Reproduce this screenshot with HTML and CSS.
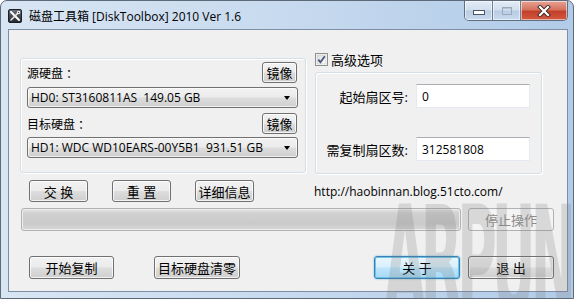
FILE: index.html
```html
<!DOCTYPE html>
<html lang="zh-CN">
<head>
    <meta charset="UTF-8">
    <title>磁盘工具箱 [DiskToolbox] 2010 Ver 1.6</title>
    <link rel="stylesheet" href="styles.css">
</head>
<body>
    <div class="window">
        <!-- 标题栏 -->
        <div class="titlebar">
            <svg class="app-icon" width="14" height="14" viewBox="0 0 14 14">
                <defs>
                    <linearGradient id="ic" x1="0" y1="0" x2="0" y2="1">
                        <stop offset="0" stop-color="#6a717b"/>
                        <stop offset="1" stop-color="#22272d"/>
                    </linearGradient>
                </defs>
                <rect x="0.5" y="0.5" width="13" height="13" rx="1.5" fill="url(#ic)" stroke="#1c2024"/>
                <path d="M3 3 L11 11" stroke="#fff" stroke-width="2" stroke-linecap="round"/>
                <path d="M11 3 L3 11" stroke="#e8e8e8" stroke-width="1.6" stroke-linecap="round"/>
                <circle cx="10.6" cy="3.4" r="1.6" fill="#fff"/>
                <circle cx="10.6" cy="3.4" r="0.7" fill="#3a3f46"/>
            </svg>
            <span class="title">磁盘工具箱 [DiskToolbox] 2010 Ver 1.6</span>
            <div class="caption-buttons">
                <span class="cap cap-min"><i></i></span>
                <span class="cap cap-max"><i></i></span>
                <span class="cap cap-close">
                    <svg width="14" height="12" viewBox="0 0 14 12">
                        <path d="M3 2 L11 10 M11 2 L3 10" stroke="#3b2a28" stroke-width="4" stroke-linecap="square"/>
                        <path d="M3 2 L11 10 M11 2 L3 10" stroke="#fff" stroke-width="2.2" stroke-linecap="square"/>
                    </svg>
                </span>
            </div>
        </div>

        <!-- 客户区 -->
        <div class="client">
            <div class="top-row">
                <div class="group disks">
                    <div class="disk-head">
                        <span>源硬盘 ：</span>
                        <button class="btn btn-mirror">镜像</button>
                    </div>
                    <div class="combo combo-first">
                        <span>HD0: ST3160811AS&nbsp; 149.05 GB</span>
                        <i class="arrow"></i>
                    </div>
                    <div class="disk-head disk-head-second">
                        <span>目标硬盘 ：</span>
                        <button class="btn btn-mirror">镜像</button>
                    </div>
                    <div class="combo combo-second">
                        <span>HD1: WDC WD10EARS-00Y5B1&nbsp; 931.51 GB</span>
                        <i class="arrow"></i>
                    </div>
                </div>

                <div class="advanced">
                    <label class="check">
                        <svg class="check-box" width="13" height="13" viewBox="0 0 13 13">
                            <defs>
                                <linearGradient id="cb" x1="0" y1="0" x2="1" y2="1">
                                    <stop offset="0" stop-color="#dcdcdc"/>
                                    <stop offset="1" stop-color="#fbfbfb"/>
                                </linearGradient>
                            </defs>
                            <rect x="0.5" y="0.5" width="12" height="12" fill="#fff" stroke="#8e8f8f"/>
                            <rect x="2" y="2" width="9" height="9" fill="url(#cb)" stroke="#c4c4c4" stroke-width="0.6"/>
                            <path d="M3.3 6.6 L5.4 9.2 L9.8 3.2" fill="none" stroke="#46577a" stroke-width="1.8"/>
                        </svg>
                        <span>高级选项</span>
                    </label>
                    <div class="group sectors">
                        <span class="field-label">起始扇区号:</span>
                        <div class="input">0</div>
                        <span class="field-label">需复制扇区数:</span>
                        <div class="input">312581808</div>
                    </div>
                </div>
            </div>

            <div class="action-row">
                <button class="btn btn-small">交 换</button>
                <button class="btn btn-small">重 置</button>
                <button class="btn btn-small">详细信息</button>
                <span class="link">http://haobinnan.blog.51cto.com/</span>
            </div>

            <div class="progress-row">
                <div class="progress"></div>
                <button class="btn btn-wide" disabled>停止操作</button>
            </div>

            <div class="bottom-row">
                <button class="btn btn-start">开始复制</button>
                <button class="btn btn-wide btn-wipe">目标硬盘清零</button>
                <button class="btn btn-wide btn-default">关 于</button>
                <button class="btn btn-wide">退 出</button>
            </div>
        </div>

        <!-- 水印 -->
        <div class="watermark">ARPUN</div>
    </div>
</body>
</html>
```

FILE: styles.css
```css
/* 整体 */
html, body {
    margin: 0;
    padding: 0;
    background: #ffffff;
}

body {
    font-family: "Open Sans", "Noto Sans CJK SC", sans-serif;
    font-size: 12px;
    color: #000;
}

.window {
    position: relative;
    width: 574px;
    height: 299px;
    box-sizing: border-box;
    border: 1px solid #5d6a7a;
    border-radius: 7px 7px 0 0;
    background: linear-gradient(to right, #d8e5f3 0%, #c9dbef 45%, #b1cbe8 100%);
    overflow: hidden;
}

/* 标题栏 */
.titlebar {
    height: 28px;
    display: flex;
    align-items: center;
}

.app-icon {
    margin-left: 7px;
    margin-top: 1px;
}

.title {
    margin-left: 7px;
    margin-top: 1px;
    font-size: 12px;
    color: #000;
}

.caption-buttons {
    align-self: flex-start;
    margin-left: auto;
    margin-right: 5px;
    display: flex;
    height: 19px;
    border: 1px solid #5f6e81;
    border-top: none;
    border-radius: 0 0 5px 5px;
    overflow: hidden;
}

.cap {
    display: flex;
    align-items: center;
    justify-content: center;
    height: 19px;
    box-shadow: inset 0 0 0 1px rgba(255, 255, 255, 0.55);
}

.cap-min,
.cap-max {
    width: 27px;
    background: linear-gradient(to bottom, #e3ecf6 0%, #d0deee 48%, #b8cce3 52%, #c8daee 100%);
    border-right: 1px solid #6f7f93;
}

.cap-min i {
    width: 10px;
    height: 3px;
    margin-top: 4px;
    background: #fff;
    border: 1px solid #4a5566;
}

.cap-max i {
    width: 8px;
    height: 6px;
    border: 1px solid #9aa9bb;
    box-shadow: inset 0 1px 0 #b5c3d3;
}

.cap-close {
    width: 46px;
    background: linear-gradient(to bottom, #e6a495 0%, #d6735e 45%, #c2402a 55%, #d4583f 100%);
}

/* 客户区 */
.client {
    margin-left: 7px;
    width: 560px;
    height: 263px;
    box-sizing: border-box;
    border: 1px solid #7d8fa5;
    background: #f0f0f0;
}

.top-row {
    display: flex;
    align-items: flex-start;
    margin-top: 22px;
    padding-left: 11px;
    gap: 9px;
}

.group {
    box-sizing: border-box;
    border: 1px solid #d5dfe5;
    border-radius: 3px;
    box-shadow: inset 1px 1px 0 #fff, 1px 1px 0 #fff;
}

.disks {
    width: 286px;
    height: 115px;
    margin-top: 6px;
    padding: 3px 7px 0 6px;
}

.disk-head {
    height: 21px;
    display: flex;
    align-items: center;
    justify-content: space-between;
    padding-right: 1px;
}

.disk-head-second {
    margin-top: 5px;
}

.combo {
    height: 21px;
    box-sizing: border-box;
    display: flex;
    align-items: center;
    padding: 0 7px 0 3px;
    border: 1px solid #707070;
    border-radius: 3px;
    background: linear-gradient(to bottom, #f2f2f2 0%, #ebebeb 48%, #dddddd 52%, #cfcfcf 100%);
    box-shadow: inset 0 0 0 1px rgba(255, 255, 255, 0.7);
}

.combo-first {
    margin-top: 4px;
}

.combo-second {
    margin-top: 3px;
}

.combo .arrow {
    margin-left: auto;
    width: 0;
    height: 0;
    border-left: 3.5px solid transparent;
    border-right: 3.5px solid transparent;
    border-top: 4px solid #000;
}

.advanced {
    width: 227px;
}

.check {
    height: 14px;
    display: flex;
    align-items: center;
    gap: 3px;
    font-size: 13px;
}

.sectors {
    margin-top: 6px;
    height: 102px;
    padding: 11px 0 0 8px;
    display: grid;
    grid-template-columns: 84px 114px;
    grid-auto-rows: 24px;
    column-gap: 8px;
    row-gap: 29px;
    align-items: center;
}

.field-label {
    text-align: right;
    font-size: 13px;
}

.input {
    height: 24px;
    box-sizing: border-box;
    padding: 3px 0 0 5px;
    background: #fff;
    border: 1px solid #e3e9ef;
    border-top-color: #abadb3;
    font-size: 12px;
}

/* 按钮 */
.btn {
    font-family: inherit;
    font-size: 12px;
    color: #000;
    margin: 0;
    padding: 0;
    height: 22px;
    border: 1px solid #707070;
    border-radius: 3px;
    background: linear-gradient(to bottom, #f2f2f2 0%, #ebebeb 48%, #dddddd 52%, #cfcfcf 100%);
    box-shadow: inset 0 0 0 1px rgba(255, 255, 255, 0.75);
}

.btn-mirror {
    width: 35px;
    height: 21px;
    font-size: 13px;
}

.btn-small {
    width: 59px;
    font-size: 13px;
}

.btn-wide {
    width: 86px;
    height: 23px;
    font-size: 13px;
}

.btn-start {
    width: 85px;
    height: 23px;
    font-size: 13px;
}

.btn:disabled {
    color: #8d8d8d;
    border-color: #adb2b5;
    background: #f4f4f4;
    box-shadow: none;
}

.btn-default {
    border-color: #3c7fb1;
    background: linear-gradient(to bottom, #eaf6fd 0%, #d9f0fc 48%, #bee6fd 52%, #a7d9f5 100%);
    box-shadow: inset 0 0 0 1px #6dc4ea, 0 0 2px #5fb7e3;
}

.action-row {
    display: flex;
    align-items: center;
    margin-top: 6px;
    padding-left: 20px;
    gap: 24px;
}

.link {
    margin-left: 36px;
    font-size: 12px;
}

.progress-row {
    display: flex;
    align-items: center;
    margin-top: 6px;
    padding-left: 12px;
    gap: 7px;
}

.progress {
    width: 440px;
    height: 23px;
    box-sizing: border-box;
    border: 1px solid #b2b2b2;
    border-radius: 3px;
    background: linear-gradient(to bottom, #e6e6e6 0%, #d1d1d1 20%, #cacaca 70%, #d8d8d8 100%);
    box-shadow: inset 0 0 0 1px #ececec;
}

.bottom-row {
    display: flex;
    align-items: center;
    margin-top: 25px;
    padding: 0 13px 0 20px;
}

.btn-wipe {
    margin-left: 40px;
}

.btn-default {
    margin-left: auto;
    margin-right: 8px;
}

/* 水印 */
.watermark {
    position: absolute;
    left: 383px;
    top: 174px;
    font-family: "DejaVu Sans", sans-serif;
    font-weight: bold;
    font-size: 150px;
    line-height: 1.15;
    letter-spacing: -14px;
    color: rgba(120, 120, 120, 0.22);
    transform: scaleX(0.36);
    transform-origin: left top;
    pointer-events: none;
}
```
